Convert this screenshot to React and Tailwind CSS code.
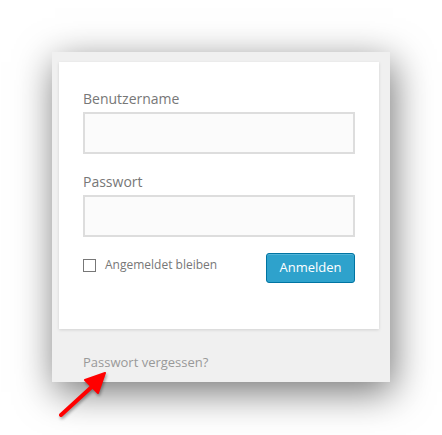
export default function App() {
  return (
    <div className="relative w-[442px] h-[435px] bg-white overflow-hidden" style={{ fontFamily: '"Open Sans", "Liberation Sans", sans-serif' }}>
      <div className="absolute left-0 top-0 pl-[52px] pt-[52px]">
        <div className="w-[338px] h-[330px] bg-[#f0f0f0] pl-[7px] pr-[11px] pt-[10px] shadow-[3px_10px_36px_rgba(0,0,0,0.55)]">
          <form className="bg-white px-[24px] pt-[27px] pb-[46px] shadow-[0_1px_3px_rgba(0,0,0,0.13)]">
            <label className="block text-[14px] leading-[20px] text-[#777] mb-[3px]">Benutzername</label>
            <input type="text" className="block w-full h-[42px] bg-[#fbfbfb] border-2 border-[#ddd] outline-none" />
            <label className="block text-[14px] leading-[20px] text-[#777] mt-[18px] mb-[3px]">Passwort</label>
            <input type="password" className="block w-full h-[42px] bg-[#fbfbfb] border-2 border-[#ddd] outline-none" />
            <div className="flex items-center justify-between mt-[16px]">
              <label className="flex items-center gap-[9px] text-[12px] text-[#777] -mt-[6px]">
                <span className="w-[13px] h-[13px] border border-[#777] bg-white" />
                Angemeldet bleiben
              </label>
              <button type="button" className="w-[89px] h-[30px] rounded-[3px] bg-[#2ea2cc] border border-[#0074a2] text-white text-[13px] shadow-[inset_0_1px_0_rgba(120,200,230,0.5)]">
                Anmelden
              </button>
            </div>
          </form>
          <div className="pl-[24px] pt-[24px] text-[13px] leading-[18px] text-[#999]">Passwort vergessen?</div>
        </div>
      </div>
      <svg className="absolute left-0 top-0" width="442" height="435" viewBox="0 0 442 435">
        <g style={{ filter: "drop-shadow(1px 2px 1.5px rgba(0,0,0,0.35))" }}>
          <line x1="61" y1="415" x2="96" y2="383" stroke="#f00" strokeWidth="4" strokeLinecap="round" />
          <polygon points="105,373 85,380 98,393" fill="#f00" stroke="#f00" strokeWidth="2" strokeLinejoin="round" />
        </g>
      </svg>
    </div>
  );
}
